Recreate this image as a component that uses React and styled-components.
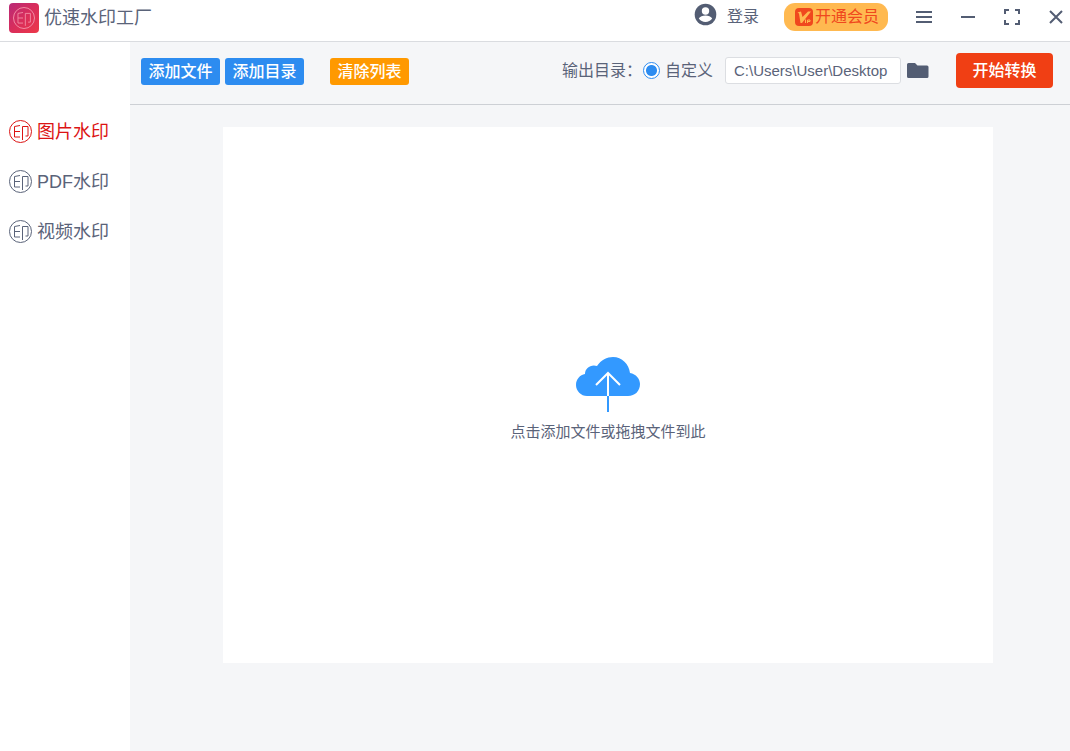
import React from "react";
import styled, { createGlobalStyle } from "styled-components";

const GlobalStyle = createGlobalStyle`
  * { box-sizing: border-box; }
  body {
    margin: 0;
    color: #5a6379;
    background: #f5f6f8;
    font: 16px/24px "Liberation Sans", "Noto Sans CJK SC", sans-serif;
  }
  button, input { font: inherit; color: inherit; margin: 0; }
  button { border: 0; padding: 0; background: none; cursor: pointer; }
  svg { display: block; flex: none; }
`;

const Window = styled.div`
  display: flex;
  flex-direction: column;
  min-height: 100vh;
`;

const TitleBar = styled.header`
  display: flex;
  justify-content: space-between;
  height: 42px;
  padding: 0 5px 8px 8px;
  align-items: center;
  background: #fff;
  border-bottom: 1px solid #dadce0;
`;

const Brand = styled.h1`
  display: flex;
  align-items: center;
  gap: 4px;
  margin: 0;
  padding-top: 3px;
  font-size: 18px;
  font-weight: 400;
`;

const Account = styled.div`
  display: flex;
  align-items: center;
`;

const LoginButton = styled.button`
  display: flex;
  align-items: center;
  gap: 10px;
  margin-right: 25px;

  svg { margin-bottom: 5px; }
`;

const MemberButton = styled.button`
  display: flex;
  align-items: center;
  gap: 2px;
  height: 28px;
  margin-right: 27px;
  padding: 0 9px 0 11px;
  border-radius: 11px;
  background: #ffb950;
  color: #f0481e;
`;

const WindowControls = styled.div`
  display: flex;
  gap: 26px;
`;

const IconButton = styled.button`
  display: flex;
`;

const Workspace = styled.div`
  display: flex;
  flex: 1;
`;

const Sidebar = styled.nav`
  display: flex;
  flex-direction: column;
  gap: 25px;
  flex: none;
  width: 130px;
  padding: 77px 8px 0;
  background: #fff;
`;

const NavLink = styled.a`
  display: flex;
  align-items: center;
  gap: 4px;
  font-size: 18px;
  color: ${(p) => (p.$active ? "#dc1414" : "#5a6379")};
  text-decoration: none;
`;

const Main = styled.main`
  display: flex;
  flex-direction: column;
  flex: 1;
  min-width: 0;
`;

const Toolbar = styled.div`
  display: flex;
  align-items: center;
  justify-content: space-between;
  height: 63px;
  padding: 0 17px 5px 11px;
  border-bottom: 1px solid #cdd0d5;
`;

const Actions = styled.div`
  display: flex;
  gap: 5px;
  padding-top: 2px;
`;

const ActionButton = styled.button`
  width: 79px;
  height: 27px;
  border-radius: 3px;
  background: ${(p) => (p.$warning ? "#ff9900" : "#2d8cf0")};
  margin-left: ${(p) => (p.$warning ? "21px" : "0")};
  color: #fff;
  font-weight: 500;
`;

const Output = styled.div`
  display: flex;
  align-items: center;
`;

const OutputLabel = styled.span`
  margin-right: 1px;
`;

const RadioLabel = styled.label`
  display: flex;
  align-items: center;
  gap: 5px;
  margin-right: 12px;
`;

const Radio = styled.input`
  appearance: none;
  width: 17px;
  height: 17px;
  border: 1px solid #2d8cf0;
  border-radius: 50%;
  background: #fff;

  &:checked {
    background: radial-gradient(circle, #2d8cf0 5px, #fff 6px);
  }
`;

const PathInput = styled.input`
  width: 176px;
  height: 27px;
  padding: 0 8px;
  border: 1px solid #dcdee2;
  border-radius: 3px;
  background: #fff;
  font-size: 15px;
`;

const FolderButton = styled(IconButton)`
  margin: 0 27px 0 5px;
`;

const StartButton = styled.button`
  width: 97px;
  height: 35px;
  border-radius: 4px;
  background: #f03f14;
  color: #fff;
  font-weight: 500;
`;

const Content = styled.section`
  display: flex;
  flex: 1;
  padding: 22px 77px 88px 93px;
`;

const DropZone = styled.button`
  display: flex;
  flex-direction: column;
  align-items: center;
  justify-content: center;
  gap: 7px;
  flex: 1;
  padding-top: 10px;
  background: #fff;
  font-size: 15px;
`;

const sealStrokes = "M12 6.5 6.500 7.500V18H12M6.500 12.500H12M14.500 21V7.500H20V17h-2.500";

function SealIcon() {
  return (
    <svg width="25" height="25" viewBox="0 0 25 25" fill="none" stroke="currentColor" aria-hidden="true">
      <circle cx="12.5" cy="12.5" r="11" />
      <path d={sealStrokes} />
    </svg>
  );
}

function LogoIcon() {
  return (
    <svg width="32" height="32" viewBox="0 0 32 32" fill="none" aria-hidden="true">
      <defs>
        <linearGradient id="logo" x1="0" y1="0" x2="1" y2="1">
          <stop offset="0" stopColor="#b82a78" />
          <stop offset="0.5" stopColor="#d92d5b" />
          <stop offset="1" stopColor="#ed3848" />
        </linearGradient>
      </defs>
      <rect x="1" y="1" width="30" height="30" rx="4" fill="url(#logo)" />
      <g stroke="#f28ba4">
        <circle cx="16" cy="16" r="10.5" />
        <path d={sealStrokes} transform="translate(4 4.500) scale(0.920)" />
      </g>
    </svg>
  );
}

function UserIcon() {
  return (
    <svg width="23" height="23" viewBox="0 0 23 23" aria-hidden="true">
      <circle cx="11.5" cy="11.5" r="10.800" fill="#535d73" />
      <circle cx="11.5" cy="8" r="3.7" fill="#fff" />
      <path d="M4.8 15.6c1-2.4 4-3.2 6.7-3.2s5.700.8 6.700 3.200c-1.500 2.200-4 3.500-6.700 3.500s-5.200-1.300-6.700-3.500Z" fill="#fff" />
    </svg>
  );
}

function VipIcon() {
  return (
    <svg width="18" height="18" viewBox="0 0 18 18" fill="none" aria-hidden="true">
      <rect width="18" height="18" rx="4" fill="#f0481e" />
      <path d="M2.500 4.500 6 3.500 7.500 9 13 3.500h3L7 15H5.500L4 5.500Z" fill="#ffb950" />
      <path d="M10.500 11.500V15M12.500 15v-3h2.500v1.500h-2.500" stroke="#ffb950" />
    </svg>
  );
}

function ControlIcon({ path }) {
  return (
    <svg width="18" height="18" viewBox="0 0 18 18" fill="none" stroke="#535d73" strokeWidth="2" aria-hidden="true">
      <path d={path} />
    </svg>
  );
}

function FolderIcon() {
  return (
    <svg width="23" height="17" viewBox="0 0 23 17" fill="#535d73" aria-hidden="true">
      <path d="M2.500 1H9l2.500 2.500H21a1.500 1.500 0 0 1 1.500 1.500v9.500A1.500 1.500 0 0 1 21 16H2.500A1.500 1.500 0 0 1 1 14.500v-12A1.500 1.500 0 0 1 2.500 1Z" />
    </svg>
  );
}

function CloudIcon() {
  return (
    <svg width="64" height="56" viewBox="0 0 64 56" fill="none" aria-hidden="true">
      <path d="M11 39C5 39 0 34 0 28c0-6 4-10 9-11 0-6 6-10 12-8C25 3 31 0 37 0c9 0 16 7 17 16 6 1 10 6 10 11 0 7-5 12-12 12Z" fill="#3399ff" />
      <path d="M20 28 32 16 44 28M32 16v23" stroke="#fff" strokeWidth="2" />
      <path d="M32 39v16" stroke="#3399ff" strokeWidth="2" />
    </svg>
  );
}

const navItems = ["图片水印", "PDF水印", "视频水印"];

export default function App() {
  return (
    <Window>
      <GlobalStyle />
      <TitleBar>
        <Brand>
          <LogoIcon />
          优速水印工厂
        </Brand>
        <Account>
          <LoginButton>
            <UserIcon />
            登录
          </LoginButton>
          <MemberButton>
            <VipIcon />
            开通会员
          </MemberButton>
          <WindowControls>
            <IconButton aria-label="菜单">
              <ControlIcon path="M1 4h16M1 9h16M1 14h16" />
            </IconButton>
            <IconButton aria-label="最小化">
              <ControlIcon path="M2 9h14" />
            </IconButton>
            <IconButton aria-label="最大化">
              <ControlIcon path="M2 6V2h4M12 2h4v4M16 12v4h-4M6 16H2v-4" />
            </IconButton>
            <IconButton aria-label="关闭">
              <ControlIcon path="M3 3l12 12M15 3 3 15" />
            </IconButton>
          </WindowControls>
        </Account>
      </TitleBar>
      <Workspace>
        <Sidebar>
          {navItems.map((name, i) => (
            <NavLink key={name} href="#" $active={i === 0}>
              <SealIcon />
              {name}
            </NavLink>
          ))}
        </Sidebar>
        <Main>
          <Toolbar>
            <Actions>
              <ActionButton>添加文件</ActionButton>
              <ActionButton>添加目录</ActionButton>
              <ActionButton $warning>清除列表</ActionButton>
            </Actions>
            <Output>
              <OutputLabel>输出目录：</OutputLabel>
              <RadioLabel>
                <Radio type="radio" name="output" defaultChecked />
                自定义
              </RadioLabel>
              <PathInput aria-label="输出目录" defaultValue={"C:\\Users\\User\\Desktop"} />
              <FolderButton aria-label="打开目录">
                <FolderIcon />
              </FolderButton>
              <StartButton>开始转换</StartButton>
            </Output>
          </Toolbar>
          <Content>
            <DropZone>
              <CloudIcon />
              点击添加文件或拖拽文件到此
            </DropZone>
          </Content>
        </Main>
      </Workspace>
    </Window>
  );
}
